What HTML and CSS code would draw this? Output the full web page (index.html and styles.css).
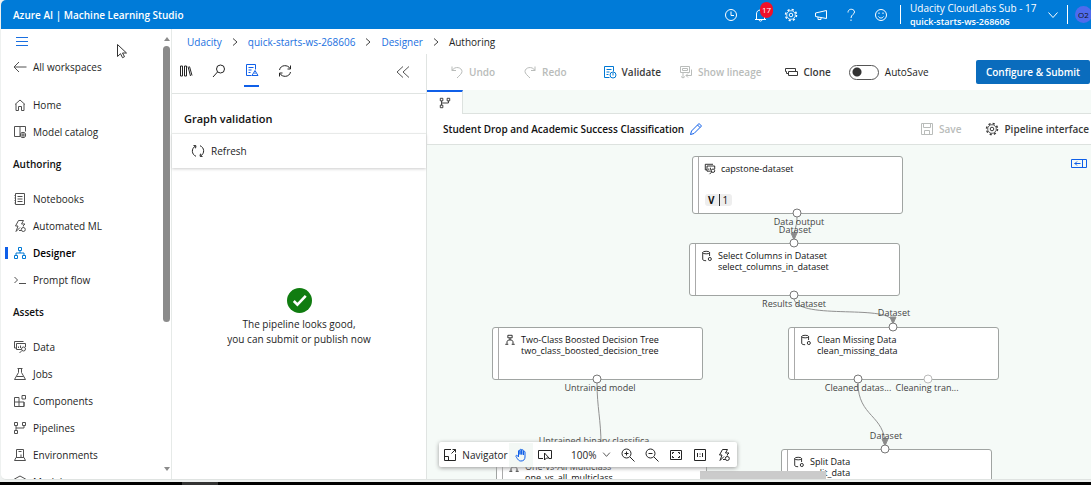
FILE: index.html
```html
<!DOCTYPE html>
<html lang="en">
<head>
<meta charset="utf-8">
<title>Azure AI | Machine Learning Studio</title>
<link rel="stylesheet" href="styles.css">
</head>
<body>
<svg class="defs" aria-hidden="true">
  <symbol id="i-book" viewBox="0 0 14 14"><path d="M7 11.500H1.500v-10h11v5M7 1.500v10"/><circle cx="10" cy="10" r="2.700"/><path d="M7.500 10h5M10 7.500v5"/></symbol>
  <symbol id="i-home" viewBox="0 0 14 14"><path d="M2 6.500L7 2l5 4.500M3 6v6.500h2.500V8.500h3v4H11V6"/></symbol>
  <symbol id="i-back" viewBox="0 0 14 14"><path d="M13.500 7H1M6 2L1 7l5 5"/></symbol>
  <symbol id="i-note" viewBox="0 0 14 14"><path d="M2.500 1.500h9v11h-9zM4.500 4.500h5M4.500 7h5M4.500 9.500h5M1.500 3.500h1M1.500 6h1M1.500 8.500h1M1.500 11h1"/></symbol>
  <symbol id="i-bolt" viewBox="0 0 14 14"><path d="M10.500 1.500H5.500L2.500 7H5l-2 5.500L7 8.500M10.500 1.500L8.500 5H12L10 7"/><circle cx="10.300" cy="10.500" r="2"/><path d="M6 11.500h2M10.300 7.500v1"/></symbol>
  <symbol id="i-org" viewBox="0 0 14 14"><path d="M5.500 1.500h3v3h-3zM1.500 9.500h3v3h-3zM9.500 9.500h3v3h-3zM7 4.500V7M3 9.500V7h8v2.500"/></symbol>
  <symbol id="i-prompt" viewBox="0 0 14 14"><path d="M1.500 4L4.500 7l-3 3M6 10.500h7"/></symbol>
  <symbol id="i-data" viewBox="0 0 14 14"><path d="M8 9.500H3.500v-6h9V7M1.500 8V1.500h9M1.500 8h2M5.500 8V6.500M7.500 8V5.500"/><circle cx="10.500" cy="9" r="2"/><path d="M9 10.500L6.500 13"/></symbol>
  <symbol id="i-flask" viewBox="0 0 14 14"><path d="M5.500 1.500v4l-4 7h11l-4-7v-4M4.500 1.500h5M3.500 9.500h7"/></symbol>
  <symbol id="i-comp" viewBox="0 0 14 14"><path d="M1.500 3.500h4.500v9h-4.500zM1.500 8h9.500v4.500H6M11 8v4.500M9 1.500h3.500V5H9z"/></symbol>
  <symbol id="i-pipe" viewBox="0 0 14 14"><path d="M1.500 1.500h3v3h-3zM9.500 1.500h3v3h-3zM1.500 9.500h3v3h-3zM3 4.500v5M11 4.500V7H3"/></symbol>
  <symbol id="i-env" viewBox="0 0 14 14"><path d="M3.500 9.500v-8h7v8M5.500 3.500h3M1.500 12.500l1.500-3h8l1.500 3zM8 9.500v-3"/></symbol>
  <symbol id="i-cube" viewBox="0 0 14 14"><path d="M7 1l5.500 3v6L7 13l-5.500-3V4zM1.500 4L7 7l5.500-3M7 7v6"/></symbol>
  <symbol id="i-gear" viewBox="0 0 14 14"><circle cx="7" cy="7" r="1.800"/><circle cx="7" cy="7" r="4.300" stroke-width=".8"/><circle cx="7" cy="7" r="5.500" stroke-width="1.500" stroke-dasharray="2.160 2.160"/></symbol>
  <symbol id="i-db" viewBox="0 0 14 14"><ellipse cx="6" cy="3" rx="4" ry="1.500"/><path d="M2 3v8c0 1 2 1.500 4 1.500M10 3v4"/><circle cx="10.300" cy="10.500" r="1.800"/></symbol>
  <symbol id="i-tree" viewBox="0 0 14 14"><path d="M4.500 1.500h5v3h-5zM7 4.500V7M3.500 11.500V9L5 7h4l1.500 2v2.500M1.500 12h3.500M9 12h3.500"/></symbol>
  <symbol id="i-check" viewBox="0 0 14 14"><path d="M6.500 12.500h-5v-11h9v5M3.500 4.500h5M3.500 7h3M3.500 9.500h2"/></symbol>
  <symbol id="i-down" viewBox="0 0 12 12"><path d="M1.500 3.500L6 8.500l4.500-5"/></symbol>
  <symbol id="i-right" viewBox="0 0 8 12"><path d="M2 2.500L6 6 2 9.500"/></symbol>
</svg>

<div class="window">
  <header class="topbar">
    <strong class="brand">Azure AI | Machine Learning Studio</strong>
    <div class="top-actions">
      <button class="icon-btn" aria-label="Recent"><svg class="icon" viewBox="0 0 14 14"><circle cx="7" cy="7" r="5.500"/><path d="M7 3.500V7.500h3"/></svg></button>
      <button class="icon-btn bell" aria-label="Notifications"><svg class="icon" viewBox="0 0 14 14"><path d="M1 11.500h11M2.500 11.500V6c0-2.500 1.500-4 4-4s4 1.500 4 4v5.500M5 12c.5 1.500 2.500 1.500 3 0"/></svg><span class="count">17</span></button>
      <button class="icon-btn" aria-label="Settings"><svg class="icon"><use href="#i-gear"/></svg></button>
      <button class="icon-btn" aria-label="Announcements"><svg class="icon" viewBox="0 0 14 14"><path d="M12.500 2.500v8L1.500 8.500v-3.500zM4 9v2.500h3V9.500"/></svg></button>
      <button class="icon-btn" aria-label="Help"><svg class="icon" viewBox="0 0 14 14"><path d="M4 4.500C4 0 10.500.5 10.500 4c0 2.500-3.500 2.500-3.500 6M7 11.500v1.500"/></svg></button>
      <button class="icon-btn" aria-label="Feedback"><svg class="icon" viewBox="0 0 14 14"><circle cx="7" cy="7" r="5.500"/><path d="M4.500 8.500c1 2 4 2 5 0M5 4.500v1.500M9 4.500v1.500"/></svg></button>
    </div>
    <button class="account"><span class="account-text"><span class="sub">Udacity CloudLabs Sub - 17</span><strong>quick-starts-ws-268606</strong></span><svg class="icon-s"><use href="#i-down"/></svg></button>
    <div class="avatar-slot"><span class="avatar">O2</span></div>
  </header>

  <div class="body">
    <aside class="sidebar">
      <nav class="nav">
        <button class="menu" aria-label="Menu"><svg class="icon" viewBox="0 0 14 14"><path d="M1 3.500h12M1 7.500h12M1 11.500h12"/></svg></button>
        <a class="item back" href="#"><svg class="icon"><use href="#i-back"/></svg>All workspaces</a>
        <a class="item" href="#"><svg class="icon"><use href="#i-home"/></svg>Home</a>
        <a class="item" href="#"><svg class="icon"><use href="#i-book"/></svg>Model catalog</a>
        <h2 class="group">Authoring</h2>
        <a class="item" href="#"><svg class="icon"><use href="#i-note"/></svg>Notebooks</a>
        <a class="item" href="#"><svg class="icon"><use href="#i-bolt"/></svg>Automated ML</a>
        <a class="item active" href="#"><svg class="icon"><use href="#i-org"/></svg>Designer</a>
        <a class="item" href="#"><svg class="icon"><use href="#i-prompt"/></svg>Prompt flow</a>
        <h2 class="group">Assets</h2>
        <a class="item" href="#"><svg class="icon"><use href="#i-data"/></svg>Data</a>
        <a class="item" href="#"><svg class="icon"><use href="#i-flask"/></svg>Jobs</a>
        <a class="item" href="#"><svg class="icon"><use href="#i-comp"/></svg>Components</a>
        <a class="item" href="#"><svg class="icon"><use href="#i-pipe"/></svg>Pipelines</a>
        <a class="item" href="#"><svg class="icon"><use href="#i-env"/></svg>Environments</a>
        <a class="item" href="#"><svg class="icon"><use href="#i-cube"/></svg>Models</a>
      </nav>
      <div class="scroll" aria-hidden="true"><span class="arrow up"></span><span class="thumb"></span><span class="arrow dn"></span></div>
    </aside>

    <main class="content">
      <nav class="crumbs" aria-label="Breadcrumb">
        <a href="#">Udacity</a><svg class="sep"><use href="#i-right"/></svg>
        <a href="#">quick-starts-ws-268606</a><svg class="sep"><use href="#i-right"/></svg>
        <a href="#">Designer</a><svg class="sep"><use href="#i-right"/></svg>
        <span>Authoring</span>
      </nav>
      <div class="split">
        <section class="panel">
          <div class="panel-tabs">
            <button class="ptab" aria-label="Library"><svg class="icon" viewBox="0 0 14 14"><path d="M1.500 2v10M3.500 2v10M5.500 2v10M7.500 2v10M1.500 2h2M1.500 12h2M5.500 2h2M5.500 12h2M9 2.500l2.500 9.500M10.500 2.500l2.500 9"/></svg></button>
            <button class="ptab" aria-label="Search"><svg class="icon" viewBox="0 0 14 14"><circle cx="8.500" cy="5" r="4"/><path d="M5.500 8L1 13"/></svg></button>
            <button class="ptab on" aria-label="Validation"><svg class="icon"><use href="#i-check"/><path d="M10 7.500l3 5H7zM10 9.500v1.500"/></svg></button>
            <button class="ptab" aria-label="Sync"><svg class="icon" viewBox="0 0 14 14"><path d="M1.500 6C2.500 .5 10 .5 12 4.500M12.500 1.500v3.500h-3M12.500 8c-1 5.500-8.500 5.500-10.500 1.500M1.500 12.500V9h3"/></svg></button>
            <button class="ptab collapse" aria-label="Collapse"><svg class="icon" viewBox="0 0 14 14"><path d="M7 1.500L1 7l6 5.500M13 1.500L7 7l6 5.500"/></svg></button>
          </div>
          <h2 class="panel-title">Graph validation</h2>
          <button class="refresh"><svg class="icon" viewBox="0 0 14 14"><path d="M4.500 2C0 4.500.5 10.500 5 12.300M2.500 1.500l2.500 .3-.5 2.500M9.500 12c4.500-2.500 4-8.500-.5-10.300M11.500 12.500L9 12.200l.5-2.500"/></svg>Refresh</button>
          <div class="result">
            <svg class="ok" viewBox="0 0 24 24"><circle cx="12" cy="12" r="12"/><path d="M6.500 12.500l3.500 3.500 8-8.500"/></svg>
            <p>The pipeline looks good,<br>you can submit or publish now</p>
          </div>
        </section>

        <section class="editor">
          <div class="toolbar">
            <button class="tool undo" disabled><svg class="icon" viewBox="0 0 14 14"><path d="M2 1.500v4h4M2 5.500c3-5 10-3 10 1 0 2-2.500 4-5 6.500"/></svg>Undo</button>
            <button class="tool redo" disabled><svg class="icon" viewBox="0 0 14 14"><path d="M12 1.500v4H8M12 5.500c-3-5-10-3-10 1 0 2 2.500 4 5 6.500"/></svg>Redo</button>
            <button class="tool validate"><svg class="icon blue"><use href="#i-check"/><circle cx="10" cy="10" r="3"/><path d="M10 8v2.500"/></svg>Validate</button>
            <button class="tool lineage" disabled><svg class="icon" viewBox="0 0 14 14"><path d="M1.500 1.500h9v6h-9zM3.500 3.500h5v2h-5zM12.500 4.500v6H7M4 7.500V12M9 8.500l-2 2 2 2M2 11.500l2 1.500 2-1.500"/></svg>Show lineage</button>
            <button class="tool clone"><svg class="icon" viewBox="0 0 14 14"><path d="M4.500 6.500h9v4h-9zM4.500 8.500h-2v-2h-1v-3h10v3"/></svg>Clone</button>
            <label class="autosave"><input type="checkbox" class="toggle">AutoSave</label>
            <button class="primary">Configure &amp; Submit</button>
          </div>
          <div class="tabs"><button class="gtab" aria-label="Graph"><svg class="icon"><use href="#i-pipe"/></svg></button></div>
          <div class="titlebar">
            <h1 class="title">Student Drop and Academic Success Classification</h1>
            <button class="icon-btn edit" aria-label="Rename"><svg class="icon" viewBox="0 0 14 14"><path d="M1.500 12.500l1-3.500 7.500-7.500 2.500 2.500L5 11.500zM8.500 3l2.500 2.500"/></svg></button>
            <button class="tool save" disabled><svg class="icon" viewBox="0 0 14 14"><path d="M1.500 1.500h11v11h-11zM3.500 1.500v4h7v-4M4.500 12.500v-4h5v4"/></svg>Save</button>
            <button class="tool"><svg class="icon"><use href="#i-gear"/></svg>Pipeline interface</button>
          </div>

          <div class="canvas">
            <article class="node n-capstone"><svg class="icon-n"><use href="#i-data"/></svg><div><p>capstone-dataset</p></div><span class="version"><b>V</b><span>1</span></span></article>
            <article class="node n-select"><svg class="icon-n"><use href="#i-db"/></svg><div><p>Select Columns in Dataset</p><p>select_columns_in_dataset</p></div></article>
            <article class="node n-tree"><svg class="icon-n"><use href="#i-tree"/></svg><div><p>Two-Class Boosted Decision Tree</p><p>two_class_boosted_decision_tree</p></div></article>
            <article class="node n-clean"><svg class="icon-n"><use href="#i-db"/></svg><div><p>Clean Missing Data</p><p>clean_missing_data</p></div></article>
            <article class="node n-split"><svg class="icon-n"><use href="#i-db"/></svg><div><p>Split Data</p><p>split_data</p></div></article>
            <article class="node n-ova"><svg class="icon-n"><use href="#i-tree"/></svg><div><p>One-vs-All Multiclass</p><p>one_vs_all_multiclass</p></div></article>
            <svg class="edges" aria-hidden="true">
              <path d="M370 72C370 82 367 84 367 94M367 154C372 176 466 158 466 178M170 238C170 262 174 275 174 300M431 238C431 272 458 270 458 300"/>
              <path class="tip" d="M364 88h6l-3 7zM463 172h6l-3 7zM455 294h6l-3 7z"/>
              <circle cx="370" cy="68" r="4"/><circle cx="367" cy="98" r="4"/><circle cx="367" cy="150" r="4"/><circle cx="466" cy="182" r="4"/><circle cx="170" cy="234" r="4"/><circle cx="431" cy="234" r="4"/><circle class="free" cx="501" cy="234" r="4"/><circle cx="458" cy="304" r="4"/>
            </svg>
            <span class="port p1">Data output</span><span class="port p2">Dataset</span><span class="port p3">Results dataset</span><span class="port p4">Dataset</span><span class="port p5">Untrained model</span><span class="port p6">Cleaned datas...</span><span class="port p7">Cleaning tran...</span><span class="port p8">Dataset</span><span class="port p9">Untrained binary classifica</span>
            <button class="expand" aria-label="Open side panel"><svg viewBox="0 0 16 10"><path d="M.5.500h15v8H.500zM11.500 .5v8M9.500 4.500h-6M6 2.500l-2 2 2 2"/></svg></button>
            <div class="hscroll"></div>
            <div class="dock">
              <button class="dock-btn nav-btn"><svg class="icon" viewBox="0 0 14 14"><path d="M8 1.500H1.500v11h11V6M1.500 8.500h4v4M8.500 5.500l4-4M9.500 1.500h3v3"/></svg>Navigator</button>
              <button class="dock-btn hand" aria-label="Pan"><svg class="icon" viewBox="0 0 14 14"><path d="M4.500 8V3c0-1 1.500-1 1.500 0v3.500V2c0-1 1.700-1 1.700 0v4.500V2.500c0-1 1.700-1 1.700 0V7 4c0-1 1.600-1 1.600 0v5c0 2.500-1.500 4-4 4-2 0-3-1-5-4.500-.5-1 .7-1.500 1.300-1L4.500 9z"/></svg></button>
              <button class="dock-btn" aria-label="Select"><svg class="icon" viewBox="0 0 14 14"><path d="M5 10.500H.5v-8h13v8H11M6.500 5v7l2-2h2.500z"/></svg></button>
              <label class="zoom"><select aria-label="Zoom level"><option>100%</option></select><svg class="chev"><use href="#i-down"/></svg></label>
              <button class="dock-btn" aria-label="Zoom in"><svg class="icon" viewBox="0 0 14 14"><circle cx="5.500" cy="5.500" r="4.500"/><path d="M9 9l4.500 4.500M3.500 5.500h4M5.500 3.500v4"/></svg></button>
              <button class="dock-btn" aria-label="Zoom out"><svg class="icon" viewBox="0 0 14 14"><circle cx="5.500" cy="5.500" r="4.500"/><path d="M9 9l4.500 4.500M3.500 5.500h4"/></svg></button>
              <button class="dock-btn" aria-label="Fit to screen"><svg class="icon" viewBox="0 0 14 14"><path d="M1.500 2.500h11v9h-11zM3.500 6V4.500H5M9 4.500h1.500V6M3.500 8v1.500H5M9 9.500h1.500V8"/></svg></button>
              <button class="dock-btn" aria-label="Actual size"><svg class="icon" viewBox="0 0 14 14"><path d="M1.500 1.500h11v11h-11zM4.500 5v4M9.500 5v4M7 5.500v1M7 8v1"/></svg></button>
              <button class="dock-btn" aria-label="Auto layout"><svg class="icon"><use href="#i-bolt"/></svg></button>
            </div>
          </div>
        </section>
      </div>
    </main>
  </div>
</div>
<div class="taskbar"><span></span></div>
<svg class="pointer" viewBox="0 0 10 15" aria-hidden="true"><path d="M.5.5v12l3-2.800 2 4 2-1-2-3.700h4z"/></svg>
</body>
</html>
```
FILE: styles.css
```css
* { box-sizing: border-box; }
body { margin: 0; height: 100vh; display: flex; flex-direction: column; overflow: hidden; background: #eef1f0; color: #242424; font: 10px/14px "Open Sans", "Noto Sans", sans-serif; }
h1, h2, p { margin: 0; font-size: inherit; }
button, input, select { font: inherit; color: inherit; border: 0; background: none; padding: 0; margin: 0; }
a { color: inherit; text-decoration: none; }
svg { fill: none; stroke: currentColor; stroke-width: 1; flex: none; }
.defs { position: absolute; width: 0; height: 0; }
.icon { width: 14px; height: 14px; }
.icon-s { width: 12px; height: 12px; }
.icon-n { width: 12px; height: 12px; }
.pointer { position: absolute; left: 117px; top: 44px; width: 10px; height: 15px; color: #333; }
.pointer path { fill: #fff; }

.window { flex: 1; min-height: 0; display: flex; flex-direction: column; margin: 0 0 2px 1px; background: #fff; border-radius: 5px 0 0 5px; overflow: hidden; border-bottom: 1px solid #dfe3e1; }
.taskbar { height: 3px; background: #000; display: flex; padding-left: 182px; }
.taskbar span { width: 36px; background: #333; }

.topbar { height: 29px; flex: none; display: flex; align-items: center; padding-left: 12px; background: #007bd8; color: #fff; }
.brand { font-weight: 600; }
.top-actions { margin-left: auto; display: flex; gap: 16px; padding-right: 12px; }
.icon-btn { display: flex; position: relative; }
.count { position: absolute; left: 6px; top: -6px; width: 13px; height: 16px; border-radius: 7px; background: #f01028; font-size: 8px; line-height: 16px; text-align: center; }
.account { display: flex; align-items: center; gap: 8px; padding: 0 8px 0 9px; border: solid #fff; border-width: 0 1px; height: 19px; text-align: left; }
.account-text { display: flex; flex-direction: column; width: 129px; white-space: nowrap; }
.account strong { font-size: 9px; font-weight: 600; }
.avatar-slot { width: 23px; padding-left: 7px; overflow: hidden; }
.avatar { display: block; width: 17px; height: 17px; border-radius: 50%; background: #4f6bed; color: #111; font-size: 8px; line-height: 17px; text-align: center; }

.body { flex: 1; min-height: 0; display: flex; }
.sidebar { width: 171px; flex: none; display: flex; border-right: 1px solid #e6eae8; overflow: hidden; }
.nav { flex: 1; min-width: 0; overflow: hidden; }
.menu { display: flex; align-items: center; height: 24px; padding-left: 14px; color: #1a6fe0; }
.item { display: flex; align-items: center; gap: 6px; height: 27px; padding-left: 12px; white-space: nowrap; }
.item .icon { color: #505050; }
.back { margin-bottom: 11px; }
.group { height: 40px; padding: 12px 12px 0; font-weight: 600; color: #111; }
.item.active { font-weight: 600; color: #000; background: linear-gradient(#0f5fe8, #0f5fe8) 4px 50% / 3px 12px no-repeat; }
.active .icon { color: #0078d4; }
.scroll { width: 9px; display: flex; flex-direction: column; align-items: center; padding: 8px 0; }
.thumb { width: 7px; flex: 0 0 276px; margin-top: 5px; border-radius: 4px; background: #8b8b8b; }
.arrow { border: 3px solid transparent; }
.up { border-bottom: 4px solid #8b8b8b; border-top: 0; }
.dn { border-top: 4px solid #8b8b8b; border-bottom: 0; margin-top: auto; }

.content { flex: 1; min-width: 0; display: flex; flex-direction: column; }
.crumbs { height: 25px; flex: none; display: flex; align-items: center; gap: 9px; padding-left: 15px; }
.crumbs a { color: #1a6fe0; }
.sep { width: 8px; height: 12px; color: #444; }
.split { flex: 1; min-height: 0; display: flex; }
.panel { width: 255px; flex: none; display: flex; flex-direction: column; border-right: 1px solid #e0e4e2; }
.panel-tabs { height: 40px; display: flex; gap: 18px; padding: 0 16px 6px 6px; border-bottom: 1px solid #e0e4e2; }
.ptab { width: 15px; height: 33px; display: flex; align-items: center; justify-content: center; }
.on { color: #0f5fe8; border-bottom: 2px solid #0f5fe8; }
.collapse { margin-left: auto; padding-top: 2px; color: #555; }
.panel-title { height: 40px; padding: 18px 12px 0; font-size: 11px; font-weight: 600; border-bottom: 1px solid #edf0ee; color: #111; }
.refresh { height: 34px; display: flex; align-items: center; gap: 6px; padding-left: 19px; box-shadow: 0 1px 3px #ccc; font-weight: 500; }
.result { flex: 1; display: flex; flex-direction: column; align-items: center; justify-content: center; text-align: center; line-height: 15px; padding-bottom: 12px; }
.ok { width: 25px; height: 25px; margin-bottom: 4px; }
.ok circle { fill: #107c10; stroke: none; }
.ok path { stroke: #fff; stroke-width: 2.500; }

.editor { flex: 1; min-width: 0; display: flex; flex-direction: column; }
.toolbar { height: 36px; flex: none; display: flex; align-items: center; padding-left: 23px; white-space: nowrap; }
.tool { display: flex; align-items: center; gap: 5px; font-weight: 600; color: #3a3a3a; }
.tool:disabled { color: #b9bcba; }
.blue { color: #0078d4; }
.redo { margin-left: 28px; }
.validate { margin-left: 36px; }
.lineage { margin-left: 18px; }
.clone { margin-left: 23px; }
.autosave { display: flex; align-items: center; gap: 6px; margin-left: 18px; }
.toggle { appearance: none; width: 30px; height: 15px; border: 1px solid #555; border-radius: 8px; background: radial-gradient(circle at 7px 6px, #333 4px, transparent 5px); }
.primary { margin-left: auto; margin-right: 1px; height: 24px; padding: 0 10px; border-radius: 2px; background: #0a6cbd; color: #fff; font-weight: 600; }
.tabs { height: 24px; flex: none; background: #f5faf7; border-bottom: 1px solid #dde2df; display: flex; }
.gtab { width: 36px; height: 24px; display: flex; align-items: center; justify-content: center; background: #fff; border-top: 2px solid #0f5fe8; border-right: 1px solid #dde2df; }
.gtab .icon { width: 12px; height: 12px; }
.titlebar { height: 31px; flex: none; display: flex; align-items: center; padding: 0 2px 0 16px; border-bottom: 1px solid #dde2df; white-space: nowrap; }
.title { font-weight: 600; color: #111; }
.edit { margin-left: 5px; color: #0f5fe8; }
.save { margin-left: auto; margin-right: 24px; }

.canvas { flex: 1; min-height: 0; position: relative; overflow: hidden; background: #f5faf7; }
.node { position: absolute; width: 211px; height: 53px; display: flex; gap: 5px; padding: 6px 0 0 11px; background: linear-gradient(90deg, #fff 5px, #aaa 5px, #aaa 6px, #fff 6px); border: 1px solid #a0a4a2; border-radius: 3px; font-size: 9px; line-height: 11px; color: #111; white-space: nowrap; }
.version { position: absolute; left: 12px; top: 37px; display: flex; gap: 4px; padding: 0 4px 0 3px; background: #eee; border-radius: 3px; line-height: 12px; font-size: 10px; }
.version span { border-left: 1px solid #333; padding-left: 3px; }
.n-capstone { left: 265px; top: 11px; height: 58px; }
.n-select { left: 262px; top: 98px; }
.n-tree { left: 65px; top: 182px; }
.n-clean { left: 361px; top: 182px; }
.n-split { left: 354px; top: 304px; }
.n-ova { left: 69px; top: 309px; }
.edges { position: absolute; inset: 0; width: 100%; height: 100%; color: #919191; }
.edges circle { fill: #fff; stroke: #777; }
.edges .free { stroke: #bbb; }
.edges .tip { fill: #8a8a8a; }
.port { position: absolute; transform: translateX(-50%); font-size: 9px; line-height: 10px; color: #444; white-space: nowrap; }
.p1 { left: 372px; top: 72px; }
.p2 { left: 368px; top: 80px; }
.p3 { left: 367px; top: 154px; }
.p4 { left: 467px; top: 163px; }
.p5 { left: 173px; top: 238px; }
.p6 { left: 431px; top: 238px; }
.p7 { left: 500px; top: 238px; }
.p8 { left: 459px; top: 286px; }
.p9 { left: 167px; top: 291px; }
.expand { position: absolute; right: 4px; top: 14px; display: flex; color: #0f5fe8; }
.expand svg { width: 16px; height: 10px; }
.hscroll { position: absolute; left: 273px; bottom: 0; width: 126px; height: 8px; background: #cbcbcb; }
.dock { position: absolute; left: 12px; bottom: 12px; height: 25px; display: flex; align-items: center; padding: 0 1px 0 3px; background: #fff; border-radius: 2px; box-shadow: 0 1px 4px #999; }
.dock-btn { height: 24px; width: 24px; display: flex; align-items: center; justify-content: center; gap: 5px; }
.nav-btn { width: 67px; }
.hand { color: #0f5fe8; background: #f3f8f5; }
.zoom { display: flex; align-items: center; gap: 5px; margin: 0 5px 0 14px; }
.zoom select { appearance: none; }
.chev { width: 9px; height: 9px; }
```
